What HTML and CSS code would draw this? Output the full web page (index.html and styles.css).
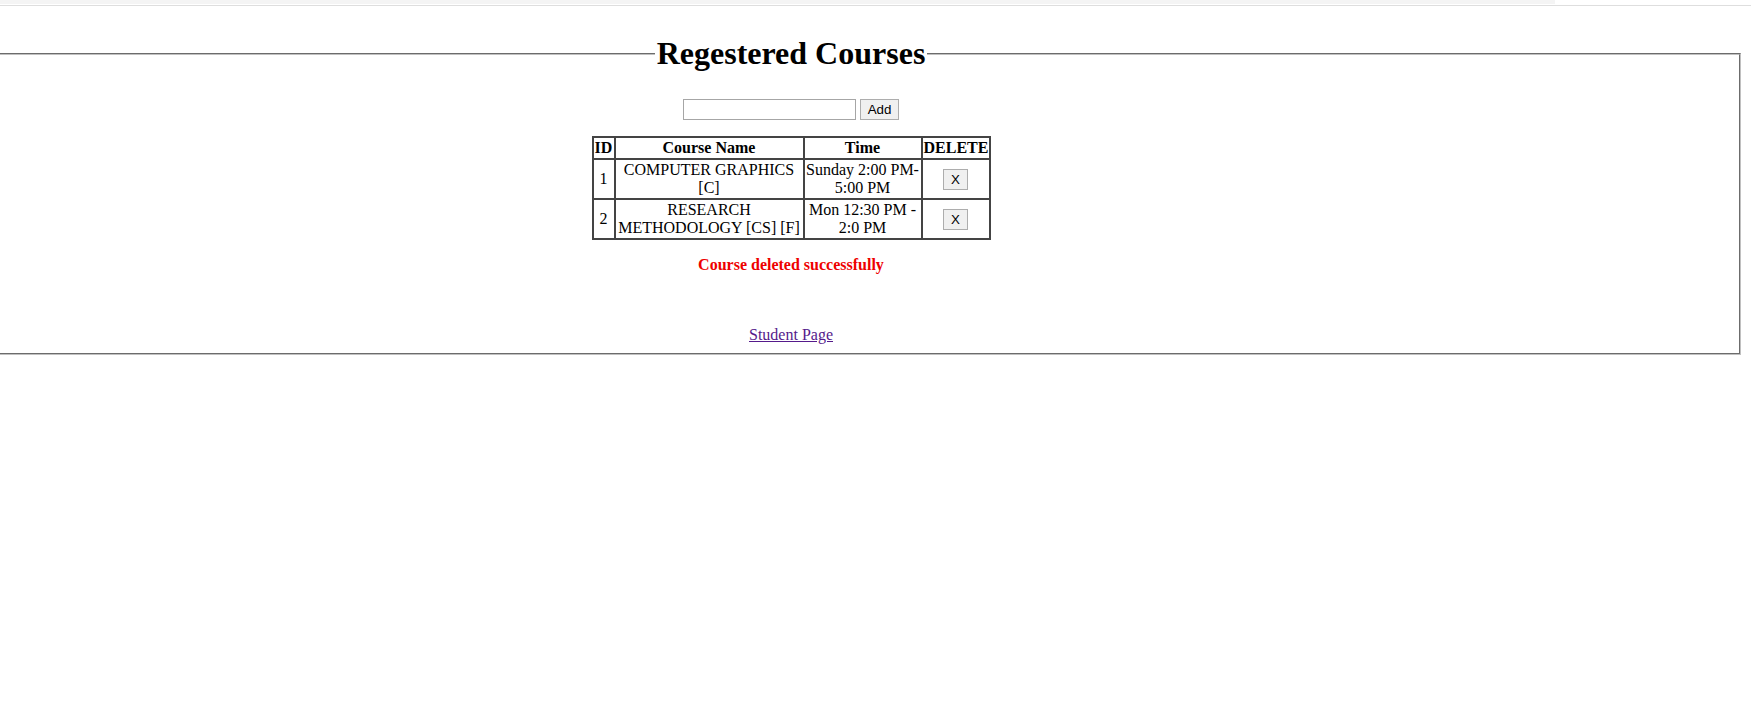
FILE: index.html
```html
<!DOCTYPE html>
<html>
<head>
<meta charset="utf-8">
<link rel="stylesheet" href="styles.css">
</head>
<body>
<div class="topband"></div>
<div class="topline"></div>
<fieldset class="box">
  <legend class="title">Regestered Courses</legend>
  <form class="addform">
    <input class="field" type="text"><button class="btn" type="button">Add</button>
  </form>
  <table class="courses">
    <thead>
      <tr><th class="c-id">ID</th><th class="c-name">Course Name</th><th class="c-time">Time</th><th class="c-del">DELETE</th></tr>
    </thead>
    <tbody>
      <tr><td>1</td><td>COMPUTER GRAPHICS [C]</td><td>Sunday 2:00 PM-5:00 PM</td><td><button class="btn xbtn" type="button">X</button></td></tr>
      <tr><td>2</td><td>RESEARCH METHODOLOGY [CS] [F]</td><td>Mon 12:30 PM - 2:0 PM</td><td><button class="btn xbtn" type="button">X</button></td></tr>
    </tbody>
  </table>
  <p class="msg">Course deleted successfully</p>
  <p class="back"><a href="#" class="link">Student Page</a></p>
</fieldset>
</body>
</html>
```
FILE: styles.css
```css
html, body {
  margin: 0;
  padding: 0;
  background: #ffffff;
}
body {
  font-family: "Liberation Serif", "Times New Roman", serif;
  font-size: 16px;
  color: #000;
  overflow: hidden;
}
.topband {
  width: 1555px;
  height: 4px;
  background: #f4f4f4;
}
.topline {
  height: 1px;
  margin-top: 1px;
  background: #dedede;
}
.box {
  margin: 29px 10px 0 -159px;
  padding: 6px 12px 9px 12px;
  border: 2px groove #c0c0c0;
  text-align: center;
}
.title {
  margin: 0 auto;
  padding: 0 2px;
  font-size: 32px;
  font-weight: bold;
  line-height: 37px;
}
.addform {
  margin: 21px 0 0 0;
  font-size: 0;
}
.field {
  box-sizing: border-box;
  width: 173px;
  height: 21px;
  margin: 0 4px 0 0;
  padding: 1px 2px;
  border: 1px solid #a6a6a6;
  font-family: "Liberation Sans", Arial, sans-serif;
  font-size: 13px;
  vertical-align: middle;
}
.btn {
  box-sizing: border-box;
  height: 21px;
  margin: 0;
  padding: 0 6px;
  border: 1px solid #adadad;
  background: #f0f0f0;
  font-family: "Liberation Sans", Arial, sans-serif;
  font-size: 13.33px;
  color: #000;
  vertical-align: middle;
}
.addform .btn {
  width: 39px;
}
.courses {
  margin: 16px auto 0 auto;
  border-spacing: 0;
  border: 1px solid #444444;
  table-layout: fixed;
  width: 399px;
}
.courses th,
.courses td {
  box-sizing: border-box;
  border: 1px solid #444444;
  padding: 1px;
  line-height: 18px;
  text-align: center;
  vertical-align: middle;
}
.courses th {
  font-weight: bold;
}
.c-id { width: 22px; }
.c-name { width: 189px; }
.c-time { width: 118px; }
.c-del { width: 68px; }
.xbtn {
  width: 25px;
  padding: 0;
}
.msg {
  margin: 16px 0 0 0;
  color: #ee0000;
  font-weight: bold;
  line-height: 18px;
}
.back {
  margin: 52px 0 0 0;
  line-height: 18px;
}
.link {
  color: #551a8b;
  text-decoration: underline;
}
```
